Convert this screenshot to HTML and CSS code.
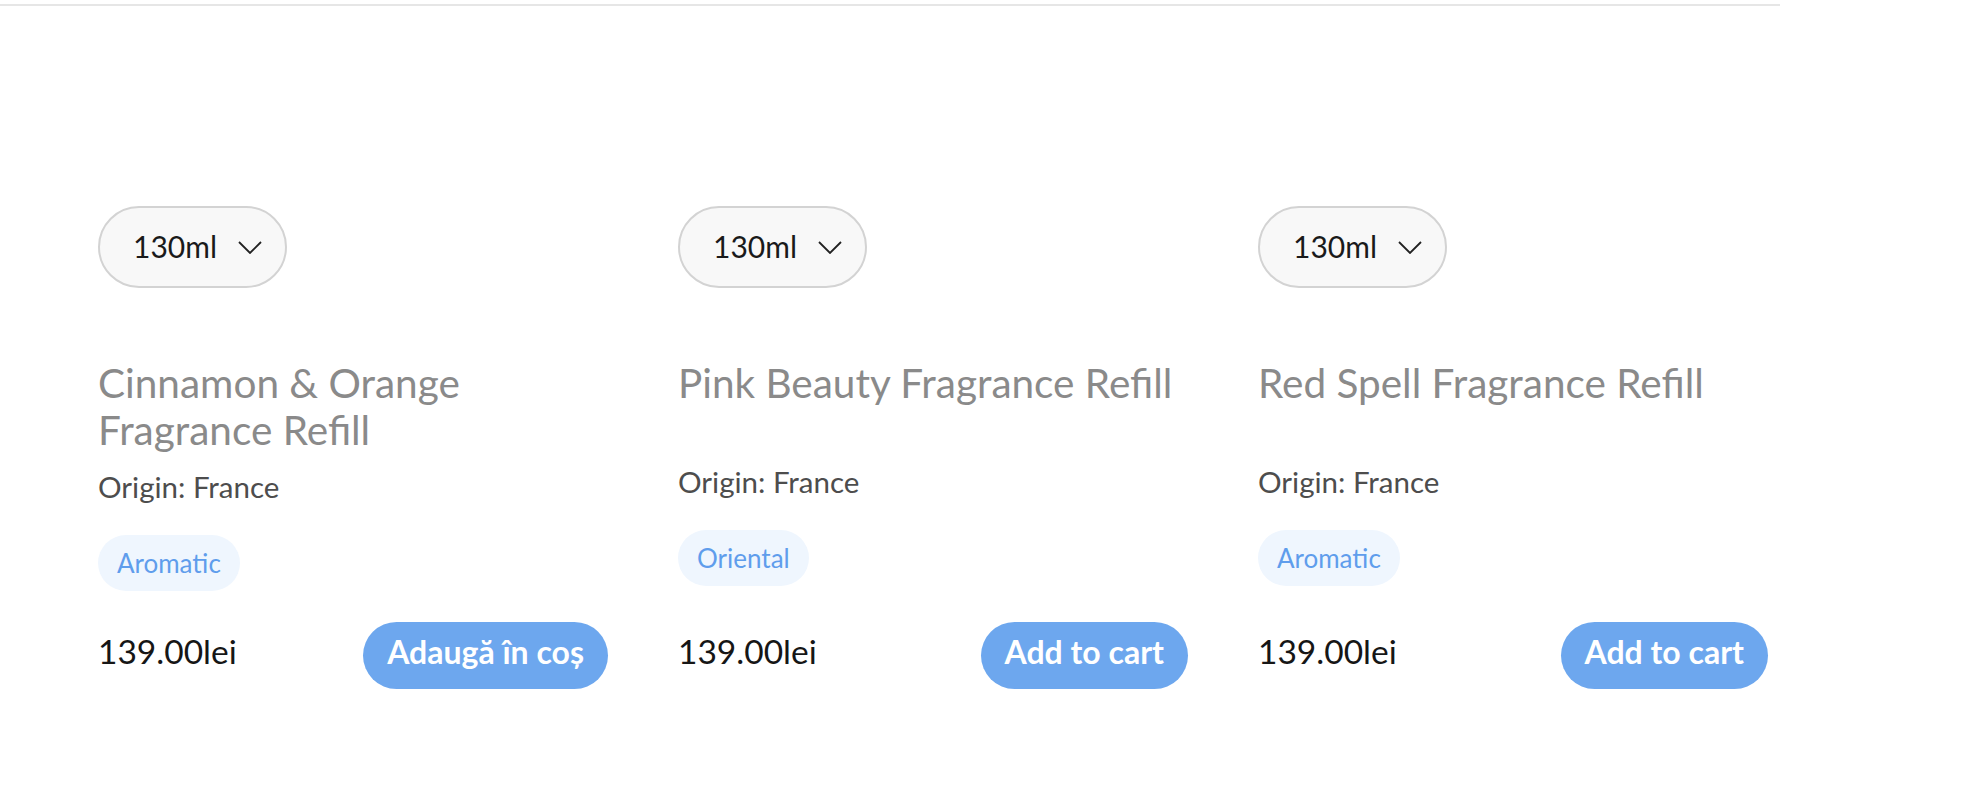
FILE: index.html
```html
<!DOCTYPE html>
<html lang="ro">
<head>
<meta charset="utf-8">
<title>Fragrance Refills</title>
<link rel="stylesheet" href="styles.css">
</head>
<body>
<div class="topbar"></div>
<main class="grid">
  <article class="card">
    <div class="size-select">
      <span class="size-value">130ml</span>
      <svg class="chev" viewBox="0 0 24 13" width="24" height="13"><polyline points="1,1 12,12 23,1" fill="none" stroke="#222" stroke-width="1.8"/></svg>
    </div>
    <h2 class="title">Cinnamon &amp; Orange Fragrance Refill</h2>
    <p class="origin">Origin: France</p>
    <span class="tag">Aromatic</span>
    <div class="buy-row">
      <span class="price">139.00lei</span>
      <button class="cart-btn">Adaugă în coș</button>
    </div>
  </article>
  <article class="card">
    <div class="size-select">
      <span class="size-value">130ml</span>
      <svg class="chev" viewBox="0 0 24 13" width="24" height="13"><polyline points="1,1 12,12 23,1" fill="none" stroke="#222" stroke-width="1.8"/></svg>
    </div>
    <h2 class="title">Pink Beauty Fragrance Refill</h2>
    <p class="origin">Origin: France</p>
    <span class="tag">Oriental</span>
    <div class="buy-row">
      <span class="price">139.00lei</span>
      <button class="cart-btn">Add to cart</button>
    </div>
  </article>
  <article class="card">
    <div class="size-select">
      <span class="size-value">130ml</span>
      <svg class="chev" viewBox="0 0 24 13" width="24" height="13"><polyline points="1,1 12,12 23,1" fill="none" stroke="#222" stroke-width="1.8"/></svg>
    </div>
    <h2 class="title">Red Spell Fragrance Refill</h2>
    <p class="origin">Origin: France</p>
    <span class="tag">Aromatic</span>
    <div class="buy-row">
      <span class="price">139.00lei</span>
      <button class="cart-btn">Add to cart</button>
    </div>
  </article>
</main>
</body>
</html>
```
FILE: styles.css
```css
* { box-sizing: border-box; }
html, body { margin: 0; padding: 0; background: #fff; }
body { font-family: "Lato", "Open Sans", sans-serif; color: #1a1a1a; }

.topbar {
  width: 1780px;
  height: 6px;
  border-bottom: 2px solid #e6e6e6;
}

.grid {
  display: grid;
  grid-template-columns: repeat(3, 510px);
  column-gap: 70px;
  padding: 200px 0 0 98px;
}

.card {
  display: flex;
  flex-direction: column;
  align-items: flex-start;
}

.size-select {
  display: flex;
  align-items: center;
  height: 82px;
  padding: 0 23px 2px 33px;
  border: 2px solid #d3d3d3;
  border-radius: 41px;
  background: #f8f8f8;
}
.size-value {
  font-size: 30px;
  line-height: 30px;
  color: #1a1a1a;
  width: 105px;
}
.chev { display: block; margin-top: 2px; }

.title {
  margin: 71px 0 0;
  min-height: 89px;
  font-size: 40.5px;
  line-height: 47px;
  font-weight: 400;
  color: #8a8a8a;
}

.origin {
  margin: 16px 0 0;
  font-size: 29.5px;
  line-height: 36px;
  color: #4d4d4d;
}

.tag {
  margin-top: 30px;
  height: 56px;
  padding: 0 19px;
  border-radius: 28px;
  background: #eff6fe;
  color: #5f9dec;
  font-size: 26px;
  line-height: 56px;
}

.buy-row {
  align-self: stretch;
  display: flex;
  justify-content: space-between;
  align-items: baseline;
  margin-top: auto;
  padding-top: 31px;
}
.price {
  font-size: 33.5px;
  color: #161616;
}
.cart-btn {
  height: 67px;
  padding: 14px 24px 21px;
  border: 0;
  border-radius: 34px;
  background: #6da7ee;
  color: #fff;
  font-family: "Lato", "Open Sans", sans-serif;
  font-weight: 700;
  font-size: 32px;
  line-height: 32px;
}
```
